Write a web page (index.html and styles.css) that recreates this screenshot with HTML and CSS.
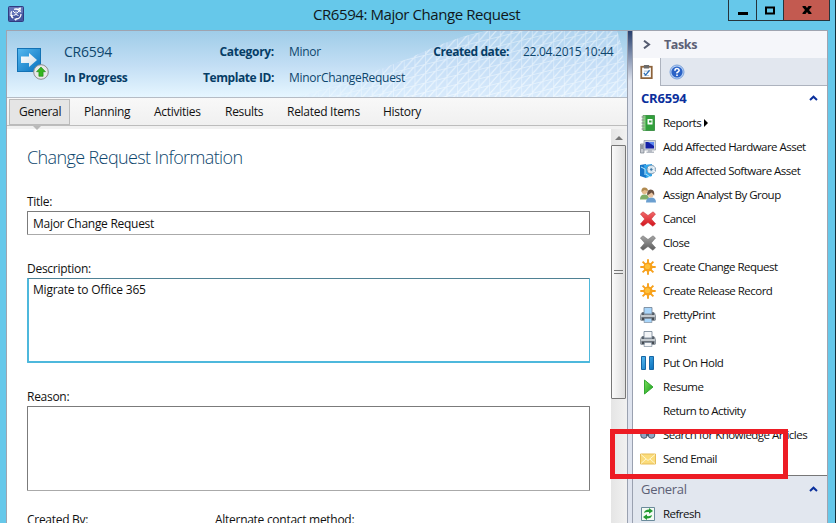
FILE: index.html
```html
<!DOCTYPE html>
<html lang="en">
<head>
<meta charset="utf-8">
<title>CR6594: Major Change Request</title>
<link rel="stylesheet" href="styles.css">
</head>
<body>
<svg class="defs" aria-hidden="true">
  <defs>
    <linearGradient id="blue" x1="0" y1="0" x2="1" y2="1"><stop offset="0" stop-color="#56b9f0"/><stop offset="1" stop-color="#0870bd"/></linearGradient>
    <linearGradient id="green" x1="0" y1="0" x2="1" y2="1"><stop offset="0" stop-color="#7be05c"/><stop offset="1" stop-color="#159a1b"/></linearGradient>
    <linearGradient id="red" x1="0" y1="0" x2="0" y2="1"><stop offset="0" stop-color="#f26b6b"/><stop offset="1" stop-color="#d3121c"/></linearGradient>
    <linearGradient id="gray" x1="0" y1="0" x2="0" y2="1"><stop offset="0" stop-color="#a5a5a5"/><stop offset="1" stop-color="#5c5c5c"/></linearGradient>
    <linearGradient id="arrow" x1="0" y1="0" x2="1" y2="1"><stop offset="0" stop-color="#fff"/><stop offset="1" stop-color="#cfdde8"/></linearGradient>
    <symbol id="cross" viewBox="0 0 16 16"><path d="M3 .8 8 4.500 13 .8 15.500 3 11.300 8l4.300 4.800-2.800 2.500L8 11.500l-5 3.800L.4 13 4.700 8 .4 3z"/></symbol>
    <symbol id="star" viewBox="0 0 16 16"><path d="M8 .3V15.700M.3 8H15.700M2.600 2.600 13.400 13.400M13.400 2.600 2.600 13.400" stroke="#f6a01c" stroke-width="1.900"/><circle cx="8" cy="8" r="4.600" fill="#f8a21b"/><circle cx="7.500" cy="7.500" r="2.600" fill="#ffc03a"/></symbol>
    <symbol id="printer" viewBox="0 0 16 16"><path d="M1 6l2-1h10l2 1 1 3v4l-1.500 1h-13L0 13V9z" fill="#8d959d"/><path d="M1 8h14v2H1z" fill="#c3c9ce"/><path d="M2 5.500h2V8H2zM12 5.500h2V8h-2z" fill="#555e68"/><path d="M4 .5h8V7H4z" fill="currentColor" stroke="#6e7f91" stroke-width=".8"/><path d="M2 10.500h12V13H2z" fill="#454b52"/><path d="M4.500 11.500h7l.5 4H4z" fill="currentColor" stroke="#8291a0" stroke-width=".7"/></symbol>
  </defs>
</svg>
<div class="window">
  <header class="titlebar">
    <svg class="app-icon" viewBox="0 0 16 16"><rect x=".5" y=".5" width="15" height="15" rx="1" fill="#4556a0" stroke="#303b80"/><path d="M1 1h14v6L1 10z" fill="#7b8bc8" opacity=".6"/><circle cx="8" cy="8" r="5" fill="none" stroke="#fff" stroke-width="1.300" stroke-dasharray="7.500 3"/><path d="M8 5.500v3l2.500 1M8 8.500l-2.500 1M5 5l2 2M11 5L9 7" stroke="#fff" fill="none"/><path d="M10 2l3-.5-.5 3zM2 9l2 3 1-3zM9 12l-1 3-2-2z" fill="#fff"/></svg>
    <h1>CR6594: Major Change Request</h1>
    <div class="controls">
      <span class="ctl"><svg viewBox="0 0 10 10"><path d="M0 7h10v3H0z"/></svg></span>
      <span class="ctl max"><svg viewBox="0 0 10 10"><path d="M1 2.500h8v6H1z" fill="none" stroke="#000" stroke-width="2"/></svg></span>
      <span class="ctl exit"><svg viewBox="0 0 10 10"><path d="M.5 1h3l1.500 2L6.500 1h3v1L7 5l2.500 3v1h-3L5 7 3.500 9h-3V8L3 5 .5 2z"/></svg></span>
    </div>
  </header>
  <div class="body">
    <main class="form">
      <section class="summary">
        <svg class="mesh" viewBox="0 0 330 66">
          <defs>
            <pattern id="grid" width="11" height="9" patternUnits="userSpaceOnUse" patternTransform="rotate(-14) skewX(-14)"><path d="M0 0h11M0 0v9M0 9L11 0" fill="none" stroke="#fff" stroke-width="1.300"/></pattern>
            <linearGradient id="fade"><stop offset="0" stop-color="#fff" stop-opacity=".15"/><stop offset=".35" stop-color="#fff" stop-opacity=".75"/><stop offset="1" stop-color="#fff" stop-opacity=".75"/></linearGradient>
            <mask id="hill"><path d="M0 66Q60 48 115 26Q160 5 190 0H320Q328 20 330 66z" fill="url(#fade)"/></mask>
          </defs>
          <g mask="url(#hill)"><path d="M0 0h330v66H0z" fill="#c9e0fa" opacity=".6"/><path d="M0 0h330v66H0z" fill="url(#grid)" opacity=".7"/></g>
        </svg>
        <svg class="cr-icon" viewBox="0 0 34 34"><rect x="1.500" y="1.500" width="23" height="23" fill="url(#blue)" stroke="#1372b4"/><path d="M5 9.500h8V6l8 7-8 7v-4H5z" fill="url(#arrow)"/><circle cx="25" cy="25" r="7.300" fill="#e8e8e8" stroke="#8d8d8d"/><path d="M25 20l4.500 4.700h-2.400v4.600h-4.200v-4.600h-2.400z" fill="#35b51c" stroke="#1b8a12" stroke-width=".6"/></svg>
        <div class="ident"><span class="crid">CR6594</span><b>In Progress</b></div>
        <div class="labels"><b class="cat">Category:</b><b class="tid">Template ID:</b></div>
        <div class="values"><span>Minor</span><span>MinorChangeRequest</span></div>
        <div class="labels created"><b class="cd">Created date:</b></div>
        <div class="values last"><span class="date">22.04.2015 10:44</span></div>
      </section>
      <nav class="tabs">
        <a class="on">General</a><a>Planning</a><a class="n3">Activities</a><a class="n4">Results</a><a class="n5">Related Items</a><a>History</a>
      </nav>
      <div class="tabline"></div>
      <div class="scroller">
        <div class="page">
          <h2>Change Request Information</h2>
          <label>Title:</label>
          <div class="box one">Major Change Request</div>
          <label>Description:</label>
          <div class="box area focus">Migrate to Office 365</div>
          <label>Reason:</label>
          <div class="box area"></div>
          <div class="pair"><label>Created By:</label><label>Alternate contact method:</label></div>
        </div>
        <div class="scrollbar">
          <div class="up"><svg viewBox="0 0 8 5"><path d="M0 5l4-4 4 4z" fill="#777"/></svg></div>
          <div class="thumb"><i></i></div>
        </div>
      </div>
    </main>
    <div class="gutter"></div>
    <aside class="tasks">
      <div class="taskhead"><svg viewBox="0 0 8 9"><path d="M1 .7l5 3.800L1 8.300" fill="none" stroke="#555b70" stroke-width="2"/></svg><b>Tasks</b></div>
      <div class="tasktabs">
        <span class="tt on"><svg viewBox="0 0 14 16"><rect x="1" y="2" width="12" height="13" fill="#fff" stroke="#8d633b" stroke-width="2"/><path d="M4 0h6v4H4z" fill="#6c6c6c"/><path d="M4 7h6M4 12h6" stroke="#9fb7cf"/><path d="M4 9l2 2.500L10.500 6" fill="none" stroke="#2b6cb5" stroke-width="1.500"/></svg></span>
        <span class="tt"><svg viewBox="0 0 16 16"><circle cx="8" cy="8" r="7" fill="#b8d2f5" stroke="#7da3dc"/><circle cx="8" cy="8" r="5.600" fill="#2a62c6"/><path d="M5.900 6.700Q6 4.500 8 4.500T10.200 6.300Q10.200 7.500 8 8.700V9.500M8 10.500v1.500" stroke="#fff" stroke-width="1.600" fill="none"/></svg></span>
      </div>
      <div class="sec"><b>CR6594</b><svg viewBox="0 0 9 6"><path d="M1 5l3.500-3.300L8 5" fill="none" stroke="#0a2f9c" stroke-width="2"/></svg></div>
      <ul>
        <li><svg viewBox="0 0 16 16"><path d="M3 .5h11.500v15H3z" fill="#31a03b" stroke="#1c7a28" stroke-width=".7"/><path d="M3 .5h2.500v15H3z" fill="#8fd088"/><path d="M1.500 2h3M1.500 5h3M1.500 8h3M1.500 11h3M1.500 14h3" stroke="#888"/><path d="M7.500 4h5v5.500h-5z" fill="#fff"/><path d="M9 5.500h2.500v2H9z" fill="#31a03b"/></svg><span>Reports</span><svg class="more" viewBox="0 0 4 8"><path d="M0 0l4 4-4 4z"/></svg></li>
        <li><svg viewBox="0 0 16 16"><path d="M.5 5H4v9H.5z" fill="#c7cbd2" stroke="#777e89" stroke-width=".7"/><path d="M1 7h2M1 9h2" stroke="#5b636f"/><path d="M4 1.500h11.500v9.500H4z" fill="#d4d8df" stroke="#8e96a4" stroke-width=".7"/><path d="M5.500 3H14v6.500H5.500z" fill="#1420a5"/><path d="M8 3h6v4z" fill="#5b87f0"/><path d="M8 11h4v1.500h2V14H6.500v-1.500H8z" fill="#b6bbc4"/></svg><span>Add Affected Hardware Asset</span></li>
        <li><svg viewBox="0 0 16 16"><path d="M0 2l6-1v14l-6-2z" fill="#1976c8"/><path d="M4 2l8-1v12l-6 2z" fill="#2fa6ec"/><path d="M1 4l4 2v6M6 11l4 3" stroke="#b8eaff" fill="none"/><circle cx="11.300" cy="6.500" r="4.300" fill="#d6e5ef" stroke="#708ca5" stroke-width=".8"/><path d="M8 4l7 5M8.500 9l6-5" stroke="#fff"/><circle cx="11.300" cy="6.500" r="1.300" fill="#467ba6"/></svg><span>Add Affected Software Asset</span></li>
        <li><svg viewBox="0 0 16 16"><path d="M0 12.500q0-5 4.500-5T9 12.500z" fill="#7fae68"/><circle cx="4.500" cy="4.500" r="2.700" fill="#e6bd8f"/><path d="M1.500 5q-.5-4.500 3-4.500T8 4L4.500 3z" fill="#b08a50"/><path d="M6 15.500q0-5 5-5t5 5z" fill="#6b9fd0"/><circle cx="10.700" cy="7.500" r="2.900" fill="#e9c3a0"/><path d="M7.200 8.500q-.7-6 3.500-6t3.500 6l-2.500-3z" fill="#6a5140"/></svg><span>Assign Analyst By Group</span></li>
        <li><svg><use href="#cross" fill="url(#red)" stroke="#c22a30" stroke-width=".5"/></svg><span>Cancel</span></li>
        <li><svg><use href="#cross" fill="url(#gray)" stroke="#666" stroke-width=".5"/></svg><span>Close</span></li>
        <li><svg><use href="#star"/></svg><span>Create Change Request</span></li>
        <li><svg><use href="#star"/></svg><span>Create Release Record</span></li>
        <li><svg class="bluepaper"><use href="#printer"/></svg><span>PrettyPrint</span></li>
        <li><svg class="whitepaper"><use href="#printer"/></svg><span>Print</span></li>
        <li class="short"><svg viewBox="0 0 16 16"><path d="M1.500 1.500h4v13h-4zM9.500 1.500h4v13h-4z" fill="url(#blue)" stroke="#1766a4"/></svg><span>Put On Hold</span></li>
        <li class="short"><svg viewBox="0 0 16 16"><path d="M4.500 1v14l8.500-7z" fill="url(#green)" stroke="#34a832"/></svg><span>Resume</span></li>
        <li><svg></svg><span>Return to Activity</span></li>
        <li><svg viewBox="0 0 16 16"><circle cx="4" cy="8" r="3.300" fill="#8fa5c2" stroke="#4d5a6c"/><circle cx="11.500" cy="8" r="3.300" fill="#8fa5c2" stroke="#4d5a6c"/><path d="M6 6h3v3H6z" fill="#4d5a6c"/></svg><span>Search for Knowledge Articles</span></li>
        <li><svg viewBox="0 0 16 16"><path d="M.5 3h15v10H.5z" fill="#fbdc7b" stroke="#e7bd58"/><path d="M1 3.500l7 6 7-6M1 12.500l5-4.500M15 12.500l-5-4.500" fill="none" stroke="#fff6cf"/></svg><span>Send Email</span></li>
      </ul>
      <div class="general">
        <div class="sec"><span>General</span><svg viewBox="0 0 9 6"><path d="M1 5l3.500-3.300L8 5" fill="none" stroke="#0a2f9c" stroke-width="2"/></svg></div>
        <ul><li><svg viewBox="0 0 16 16"><path d="M1.500 1.500h13v13h-13z" fill="#f3faf3" stroke="#6b8b9b"/><path d="M4 7q.5-3.500 5-3.500V2l4 3-4 2.800V6Q6 5.500 4 7zM12 9q-.5 3.500-5 3.500V14l-4-3 4-2.800V10q3 .5 5-1z" fill="#229b31"/></svg><span>Refresh</span></li></ul>
      </div>
    </aside>
  </div>
  <div class="highlight"></div>
</div>
</body>
</html>
```

FILE: styles.css
```css
* { box-sizing: border-box; }
body { margin: 0; overflow: hidden; font: 12px/16px "Open Sans", "Noto Sans", sans-serif; letter-spacing: -.28px; color: #111; }
svg { display: block; flex: none; }
.defs { position: absolute; width: 0; height: 0; }
.window { position: relative; width: 836px; height: 523px; display: flex; flex-direction: column; background: #66c8ea; border-right: 1px solid #16303b; overflow: hidden; }
.titlebar { height: 30px; flex: none; display: flex; align-items: flex-start; padding-left: 8px; }
.app-icon { width: 16px; height: 16px; margin-top: 6px; }
h1 { margin: 4px 0 0 289px; font-size: 15px; line-height: 20px; font-weight: 400; letter-spacing: -.43px; width: 415px; white-space: nowrap; color: #10171a; }
.controls { display: flex; height: 21px; border: 1px solid #26343b; border-top: 0; }
.ctl { width: 27px; display: flex; align-items: center; justify-content: center; }
.ctl svg { width: 10px; height: 10px; }
.ctl + .ctl { border-left: 1px solid #26343b; }
.ctl.exit { width: 46px; background: #c35a50; }
.body { flex: 1; min-height: 0; margin: 0 7px 0 6px; display: flex; border: 1px solid #9fa4b0; border-bottom: 0; }
.form { width: 620px; flex: none; display: flex; flex-direction: column; background: #fff; }
.summary { position: relative; height: 66px; flex: none; display: flex; padding: 11px 0 0 9px; background: linear-gradient(#9fcde8, #c1ddf4 50%, #e6f6ff); color: #0d466d; }
.mesh { position: absolute; right: 0; top: 0; width: 330px; height: 66px; }
.cr-icon { width: 34px; height: 34px; margin-top: 5px; }
.ident, .labels, .values { position: relative; flex: none; display: flex; flex-direction: column; gap: 6px; line-height: 20px; white-space: nowrap; }
.ident { width: 110px; margin-left: 14px; }
.crid { font-size: 14px; letter-spacing: -.25px; }
.summary b { color: #063d66; }
.labels { width: 100px; align-items: flex-end; }
.tid { letter-spacing: -.42px; }
.cd { letter-spacing: -.4px; }
.values { width: 130px; margin-left: 15px; }
.labels.created { width: 90px; }
.values.last { width: 95px; margin-left: 14px; }
.date { letter-spacing: -.28px; }
.tabs { height: 28px; flex: none; display: flex; padding: 1px 0 0 2px; background: linear-gradient(#f8f8f8, #f0f0f0); border-top: 1px solid #b5bcc5; white-space: nowrap; }
.tabs a { line-height: 26px; width: 70px; padding-left: 14px; }
.tabs .on { position: relative; width: 61px; padding-left: 9px; background: #e5e5e5; border: 1px solid #bbb; line-height: 24px; }
.tabs .on::after { content: ""; position: absolute; left: 23px; top: 26px; border: 4px solid transparent; border-top-color: #b9b9b9; z-index: 2; }
.tabs .n3 { width: 71px; }
.tabs .n4 { width: 62px; }
.tabs .n5 { width: 96px; }
.tabline { height: 4px; flex: none; background: #f1f1f1; border-top: 1px solid #bcbcbc; }
.scroller { flex: 1; min-height: 0; display: flex; }
.page { width: 604px; padding: 16px 0 0 20px; }
h2 { margin: 0 0 25px; font: 300 18px/24px "Open Sans", sans-serif; letter-spacing: -.62px; color: #0d466d; }
label { display: block; height: 17px; }
.box { width: 563px; border: 1px solid #7b7b7b; border-bottom-color: #aaa; border-radius: 1px; padding-left: 5px; }
.one { height: 24px; line-height: 24px; margin-bottom: 26px; }
.area { height: 85px; padding-top: 3px; }
.focus { border: 2px solid #4db8dc; border-top: 1px solid #4f8194; border-right-width: 1px; padding-left: 4px; margin-bottom: 26px; letter-spacing: -.22px; }
.pair { display: flex; margin-top: 21px; }
.pair label { width: 188px; white-space: nowrap; }
.scrollbar { width: 16px; padding-right: 1px; background: linear-gradient(90deg, #e5e5e5, #f1f1f1); }
.up { height: 16px; display: flex; align-items: center; justify-content: center; }
.up svg { width: 8px; height: 5px; }
.thumb { height: 254px; border: 1px solid #777; border-radius: 1px; background: linear-gradient(90deg, #fafafa, #dedede); display: flex; align-items: center; justify-content: center; }
.thumb i { width: 9px; height: 4px; border: 1px solid #777; border-width: 1px 0; }
.gutter { width: 6px; flex: none; border: 1px solid #9aa1b0; border-width: 0 1px; background: linear-gradient(#263e6d, #dfe4ef 50px); }
.tasks { flex: 1; background: #fff; white-space: nowrap; }
.taskhead { height: 27px; display: flex; align-items: center; padding-left: 10px; background: #f5f6fa; font-size: 12.500px; letter-spacing: -.4px; color: #5c6075; }
.taskhead svg { width: 8px; height: 9px; margin-right: 13px; }
.tasktabs { height: 28px; display: flex; background: #e2e7ef; border-bottom: 1px solid #adb3be; }
.tt { width: 32px; display: flex; align-items: center; justify-content: center; }
.tt svg { width: 16px; height: 16px; }
.tt.on { width: 28px; height: 28px; background: #fff; border-right: 1px solid #adb3be; }
.tt.on svg { width: 13px; height: 14px; }
.sec { height: 25px; display: flex; justify-content: space-between; align-items: center; padding: 0 9px 1px 8px; font-size: 13px; color: #0a2f9c; }
.sec b { letter-spacing: -.2px; }
.sec svg { width: 9px; height: 6px; }
ul { list-style: none; margin: 0; padding: 0 0 0 7px; font-size: 11.500px; letter-spacing: -.52px; }
li { height: 24px; display: flex; align-items: center; }
li svg { width: 16px; height: 16px; margin-right: 7px; }
.short { letter-spacing: -.45px; }
li .more { width: 4px; height: 8px; margin-left: 3px; }
.bluepaper { color: #a9d6fb; }
.whitepaper { color: #f3f5f7; }
.general { margin-top: 4px; padding-top: 1px; height: 60px; border-top: 1px solid #777; background: #e2e7ef; }
.general .sec { color: #5c6075; letter-spacing: -.3px; }
.highlight { position: absolute; left: 610px; top: 429px; width: 178px; height: 50px; border: 5px solid #ed1c24; }
```
